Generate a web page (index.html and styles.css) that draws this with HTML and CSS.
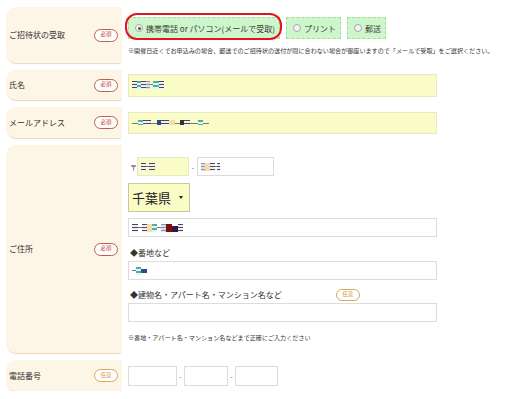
FILE: index.html
```html
<!DOCTYPE html>
<html lang="ja">
<head>
<meta charset="utf-8">
<title>ご招待状フォーム</title>
<link rel="stylesheet" href="styles.css">
</head>
<body>
<div class="form">
  <div class="row r1">
    <div class="label"><span>ご招待状の受取</span><span class="badge req">必須</span></div>
    <div class="content c1">
      <div class="options">
        <label class="opt"><span class="radio on"></span>携帯電話 or パソコン(メールで受取)<span class="ring"></span></label>
        <label class="opt"><span class="radio"></span>プリント</label>
        <label class="opt"><span class="radio"></span>郵送</label>
      </div>
      <p class="note n1">※開催日近くでお申込みの場合、郵送でのご招待状の送付が間に合わない場合が御座いますので「メールで受取」をご選択ください。</p>
    </div>
  </div>

  <div class="row r2">
    <div class="label"><span>氏名</span><span class="badge req">必須</span></div>
    <div class="content mid">
      <div class="field yellow full h23">
        <span class="mz"><i class="s w5"></i><i class="t w4"></i><i class="s w5"></i><i class="g w4"></i><i class="l w3"></i><i class="t w6"></i><i class="s w5"></i></span>
      </div>
    </div>
  </div>

  <div class="row r3">
    <div class="label"><span>メールアドレス</span><span class="badge req">必須</span></div>
    <div class="content mid">
      <div class="field yellow full h22">
        <span class="mz thin"><i class="l w6"></i><i class="t w5"></i><i class="s w8"></i><i class="l w6"></i><i class="b w4"></i><i class="s w8"></i><i class="c w6"></i><i class="l w5"></i><i class="d w4"></i><i class="s w6"></i><i class="l w8"></i><i class="t w5"></i><i class="l w6"></i></span>
      </div>
    </div>
  </div>

  <div class="row r4">
    <div class="label"><span>ご住所</span><span class="badge req">必須</span></div>
    <div class="content c4">
      <div class="zip">
        <span class="mark">〒</span>
        <div class="field yellow zip1"><span class="mz"><i class="s w5"></i><i class="l w3"></i><i class="s w6"></i></span></div>
        <span class="dash">-</span>
        <div class="field zip2"><span class="mz"><i class="g w4"></i><i class="c w5"></i><i class="s w5"></i><i class="l w2"></i><i class="s w3"></i></span></div>
      </div>
      <div class="select">千葉県<span class="arrow"></span></div>
      <div class="field full h19 addr">
        <span class="mz"><i class="s w6"></i><i class="l w4"></i><i class="s w5"></i><i class="c w5"></i><i class="t w5"></i><i class="l w4"></i><i class="g w5"></i><i class="r w6"></i><i class="p w6"></i><i class="s w5"></i></span>
      </div>
      <p class="sub">◆番地など</p>
      <div class="field full h19 tight">
        <span class="mz"><i class="l w4"></i><i class="t w5"></i><i class="b w6"></i></span>
      </div>
      <p class="sub with-badge">◆建物名・アパート名・マンション名など<span class="badge opt-badge">任意</span></p>
      <div class="field full h19 tight"></div>
      <p class="note n4">※番地・アパート名・マンション名などまで正確にご入力ください</p>
    </div>
  </div>

  <div class="row r5">
    <div class="label"><span>電話番号</span><span class="badge opt-badge">任意</span></div>
    <div class="content tel">
      <div class="field t1"></div>
      <span class="dash">-</span>
      <div class="field t2"></div>
      <span class="dash">-</span>
      <div class="field t3"></div>
    </div>
  </div>
</div>
</body>
</html>
```

FILE: styles.css
```css
* { box-sizing: border-box; }
html, body {
  margin: 0;
  background: #fff;
}
body {
  font-family: "Noto Sans CJK JP", "Noto Sans", sans-serif;
  color: #333;
}
.form {
  display: flex;
  flex-direction: column;
  gap: 7px;
  padding: 7px 0 0 6px;
}
.row {
  display: grid;
  grid-template-columns: 116px 309px;
  column-gap: 6px;
}
.r1 { height: 56px; }
.r2 { height: 30px; }
.r3 { height: 31px; }
.r4 { height: 208px; }
.r5 { height: 31px; }

.label {
  background: #fdf6e7;
  border-radius: 10px 0 0 10px;
  box-shadow: 0 2px 1px -1px #ead8b6;
  display: flex;
  align-items: center;
  justify-content: space-between;
  padding: 0 4px 0 3px;
  font-size: 8px;
  line-height: 10px;
  color: #333;
}
.badge {
  display: inline-flex;
  align-items: center;
  justify-content: center;
  width: 24px;
  height: 13px;
  border-radius: 7px;
  background: #fff;
  font-size: 5.5px;
  font-weight: normal;
  line-height: 1;
}
.badge.req {
  border: 1px solid #b9614f;
  color: #c23a2a;
}
.badge.opt-badge {
  border: 1px solid #dba95c;
  color: #d5953a;
}

.content { display: flex; flex-direction: column; }
.content.mid { justify-content: center; }

/* row 1 */
.c1 { padding-top: 10px; }
.options { display: flex; gap: 6px; }
.opt {
  position: relative;
  display: inline-flex;
  align-items: center;
  gap: 3px;
  height: 22px;
  padding: 0 4px 0 6px;
  background: #cdf6cb;
  border: 1px dashed #a9d8a4;
  font-size: 8px;
  color: #3a3a3a;
  white-space: nowrap;
}
.radio {
  width: 8px;
  height: 8px;
  border-radius: 50%;
  border: 1px solid #a8a8a8;
  background: #f4f4f4;
  flex: none;
  position: relative;
}
.radio.on::after {
  content: "";
  position: absolute;
  left: 1.5px; top: 1.5px;
  width: 3px; height: 3px;
  border-radius: 50%;
  background: #555;
}
.ring {
  position: absolute;
  inset: -5px -3px -2px -4px;
  border: 2px solid #e2141e;
  border-radius: 12px;
  pointer-events: none;
}
.note {
  margin: 0;
  font-size: 6.1px;
  line-height: 8px;
  white-space: nowrap;
  color: #333;
}
.n1 { margin-top: 8px; }

/* fields */
.field {
  background: #fff;
  border: 1px solid #dcdcdc;
  display: flex;
  align-items: center;
  padding-left: 3px;
}
.field.yellow {
  background: #fafcc8;
  border-color: #e8e8c6;
}
.full { width: 309px; }
.h23 { height: 23px; }
.h22 { height: 22px; }
.h19 { height: 19px; }

/* mosaic (blurred personal data) */
.mz { display: inline-flex; align-items: center; height: 10px; }
.mz i { display: block; height: 8px; }
.mz.thin i { height: 5px; }
.mz .s { background: repeating-linear-gradient(to bottom, #4a4a4a 0 1px, #eef 1px 3px); }
.mz .l { background: repeating-linear-gradient(to bottom, transparent 0 3px, #777 3px 4px, transparent 4px 8px); }
.mz .t { background: repeating-linear-gradient(to bottom, #5aa6a8 0 2px, #cfe 2px 4px); }
.mz .g { background: repeating-linear-gradient(to bottom, #8a9aa6 0 1px, #dde 1px 3px); }
.mz .c { background: #f6dca8; }
.mz .b { background: #2e4c8a; height: 4px; }
.mz .d { background: #333; height: 3px; }
.mz .r { background: #7a1010; }
.mz .p { background: #3c1250; height: 6px; margin-top: 3px; }
.w2 { width: 2px; } .w3 { width: 3px; } .w4 { width: 4px; }
.w5 { width: 5px; } .w6 { width: 6px; } .w8 { width: 8px; }

/* address row */
.c4 { padding-top: 12px; }
.zip { display: flex; align-items: center; height: 19px; }
.mark { font-size: 7px; width: 9px; padding-left: 2px; }
.zip1 { width: 52px; height: 19px; }
.zip2 { width: 77px; height: 19px; }
.dash { font-size: 7px; width: 8px; text-align: center; color: #555; }
.select {
  margin-top: 7px;
  width: 62px;
  height: 29px;
  background: #fafcc6;
  border: 1px solid #c9c79c;
  display: flex;
  align-items: center;
  padding-left: 3px;
  font-size: 13px;
  color: #222;
}
.arrow {
  margin-left: auto;
  margin-right: 6px;
  width: 0; height: 0;
  border-left: 2px solid transparent;
  border-right: 2px solid transparent;
  border-top: 3px solid #222;
}
.addr { margin-top: 6px; }
.sub {
  margin: 10px 0 0 2px;
  font-size: 8px;
  line-height: 12px;
  display: flex;
  align-items: center;
}
.with-badge { margin-top: 9px; }
.with-badge .badge { margin-left: 54px; height: 12px; }
.tight { margin-top: 2px; }
.n4 { margin-top: 12px; }

/* tel */
.content.tel { flex-direction: row; align-items: center; justify-content: flex-start; }
.tel .field { height: 20px; }
.t1 { width: 49px; }
.t2 { width: 44px; }
.t3 { width: 43px; }
.tel .dash { width: 7px; }
```
